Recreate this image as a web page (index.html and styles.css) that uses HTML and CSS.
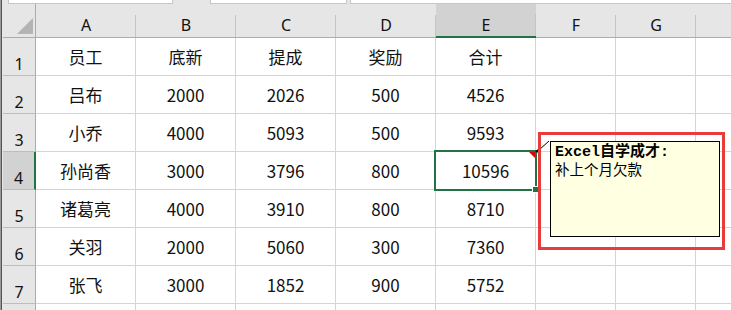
FILE: index.html
```html
<!DOCTYPE html>
<html lang="zh-CN">
<head>
<meta charset="utf-8">
<title>Sheet</title>
<link rel="stylesheet" href="styles.css">
</head>
<body>
<div class="app">
  <div class="edge"></div>
  <div class="sheet">
    <div class="tabs">
      <div class="tab t1"></div>
      <div class="tab t2"></div>
      <div class="tab t3"></div>
    </div>
    <div class="grid">
      <div class="ch corner"><span class="tri"></span></div>
      <div class="ch">A</div><div class="ch">B</div><div class="ch">C</div><div class="ch">D</div><div class="ch sel">E</div><div class="ch">F</div><div class="ch">G</div><div class="ch last"></div>

      <div class="rh">1</div><div class="c">员工</div><div class="c">底新</div><div class="c">提成</div><div class="c">奖励</div><div class="c">合计</div><div class="c"></div><div class="c"></div><div class="c last"></div>
      <div class="rh">2</div><div class="c">吕布</div><div class="c">2000</div><div class="c">2026</div><div class="c">500</div><div class="c">4526</div><div class="c"></div><div class="c"></div><div class="c last"></div>
      <div class="rh">3</div><div class="c">小乔</div><div class="c">4000</div><div class="c">5093</div><div class="c">500</div><div class="c">9593</div><div class="c"></div><div class="c"></div><div class="c last"></div>
      <div class="rh sel">4</div><div class="c">孙尚香</div><div class="c">3000</div><div class="c">3796</div><div class="c">800</div><div class="c">10596</div><div class="c"></div><div class="c"></div><div class="c last"></div>
      <div class="rh">5</div><div class="c">诸葛亮</div><div class="c">4000</div><div class="c">3910</div><div class="c">800</div><div class="c">8710</div><div class="c"></div><div class="c"></div><div class="c last"></div>
      <div class="rh">6</div><div class="c">关羽</div><div class="c">2000</div><div class="c">5060</div><div class="c">300</div><div class="c">7360</div><div class="c"></div><div class="c"></div><div class="c last"></div>
      <div class="rh">7</div><div class="c">张飞</div><div class="c">3000</div><div class="c">1852</div><div class="c">900</div><div class="c">5752</div><div class="c"></div><div class="c"></div><div class="c last"></div>
      <div class="rh"></div><div class="c"></div><div class="c"></div><div class="c"></div><div class="c"></div><div class="c"></div><div class="c"></div><div class="c"></div><div class="c last"></div>
    </div>
  </div>

  <div class="selbox"><span class="handle"></span></div>
  <span class="note-mark"></span>
  <svg class="connector" width="20" height="16" viewBox="0 0 20 16">
    <line x1="4" y1="10" x2="14" y2="1" stroke="#000" stroke-width="1"/>
    <polygon points="0,12 5,7 5,13" fill="#000"/>
  </svg>
  <div class="highlight"></div>
  <div class="comment">
    <div class="author">Excel自学成才:</div>
    <div class="body">补上个月欠款</div>
  </div>
</div>
</body>
</html>
```

FILE: styles.css
```css
* { box-sizing: border-box; }
html, body {
  margin: 0;
  padding: 0;
  width: 731px;
  height: 310px;
  overflow: hidden;
  background: #fff;
}
.app {
  position: relative;
  display: flex;
  width: 731px;
  height: 310px;
  overflow: hidden;
  font-family: "Noto Sans CJK SC", "Noto Sans", sans-serif;
}
.edge {
  width: 3px;
  flex: none;
  background: linear-gradient(to right, #9a9a9a 0, #9a9a9a 1px, #217346 1px, #217346 2px, #e6e6e6 2px);
}
.sheet {
  flex: 1;
  display: flex;
  flex-direction: column;
  background: #fff;
}
.tabs {
  height: 4px;
  display: flex;
  background: #e6e6e6;
}
.tab {
  height: 4px;
  background: #fff;
  border: 1px solid #c6c6c6;
  border-top: none;
}
.t1 { margin-left: 5px; width: 165px; }
.t2 { margin-left: 37px; width: 137px; }
.t3 { margin-left: 3px; flex: 1; border-right: none; }

.grid {
  display: grid;
  grid-template-columns: 33px repeat(5, 100px) repeat(2, 80px) 1fr;
  grid-template-rows: 34px repeat(8, 38px);
}
.ch {
  position: relative;
  background: #e6e6e6;
  border-bottom: 1px solid #ababab;
  display: flex;
  align-items: flex-end;
  justify-content: center;
  padding-bottom: 2px;
  font-family: "Noto Sans", "Liberation Sans", sans-serif;
  font-size: 16px;
  line-height: 20px;
  color: #111;
}
.ch::after {
  content: "";
  position: absolute;
  right: 0;
  bottom: 0;
  width: 1px;
  height: 22px;
  background: #c4c4c4;
}
.ch.last::after { display: none; }
.ch.corner {
  border-right: 1px solid #ababab;
}
.ch.corner::after { display: none; }
.tri {
  position: absolute;
  right: 2px;
  bottom: 3px;
  width: 0;
  height: 0;
  border-left: 16px solid transparent;
  border-bottom: 16px solid #b4b4b4;
}
.ch.sel {
  background: #d2d2d2;
  border-bottom: 2px solid #217346;
  padding-bottom: 1px;
}
.rh {
  background: #e6e6e6;
  border-right: 1px solid #ababab;
  border-bottom: 1px solid #bdbdbd;
  display: flex;
  align-items: flex-end;
  justify-content: center;
  padding-bottom: 1px;
  font-family: "Noto Sans", "Liberation Sans", sans-serif;
  font-size: 16px;
  line-height: 20px;
  color: #111;
}
.rh.sel {
  background: #d2d2d2;
  border-right: 2px solid #217346;
}
.c {
  border-right: 1px solid #d4d4d4;
  border-bottom: 1px solid #d4d4d4;
  display: flex;
  align-items: center;
  justify-content: center;
  font-size: 17px;
  color: #111;
  padding-bottom: 1px;
}
.c.last { border-right: none; }

.selbox {
  position: absolute;
  left: 434px;
  top: 150px;
  width: 103px;
  height: 41px;
  border: 2px solid #217346;
}
.handle {
  position: absolute;
  right: -4px;
  bottom: -4px;
  width: 7px;
  height: 7px;
  background: #217346;
  border: 1px solid #fff;
}
.note-mark {
  position: absolute;
  left: 529px;
  top: 152px;
  width: 0;
  height: 0;
  border-left: 6px solid transparent;
  border-top: 6px solid #e00000;
}
.connector {
  position: absolute;
  left: 535px;
  top: 140px;
}
.highlight {
  position: absolute;
  left: 538px;
  top: 132px;
  width: 187px;
  height: 118px;
  border: 3px solid #e83c3c;
}
.comment {
  position: absolute;
  left: 550px;
  top: 141px;
  width: 170px;
  height: 96px;
  background: #ffffe1;
  border: 1px solid #000;
  padding: 3px 4px;
  font-size: 14.5px;
  color: #000;
}
.author {
  height: 16px;
  line-height: 16px;
  font-family: "Liberation Mono", "Noto Sans CJK SC", monospace;
  font-size: 15px;
  font-weight: bold;
  white-space: nowrap;
}
.body {
  height: 16px;
  line-height: 16px;
  font-family: "Noto Sans CJK SC", sans-serif;
  white-space: nowrap;
}
```
